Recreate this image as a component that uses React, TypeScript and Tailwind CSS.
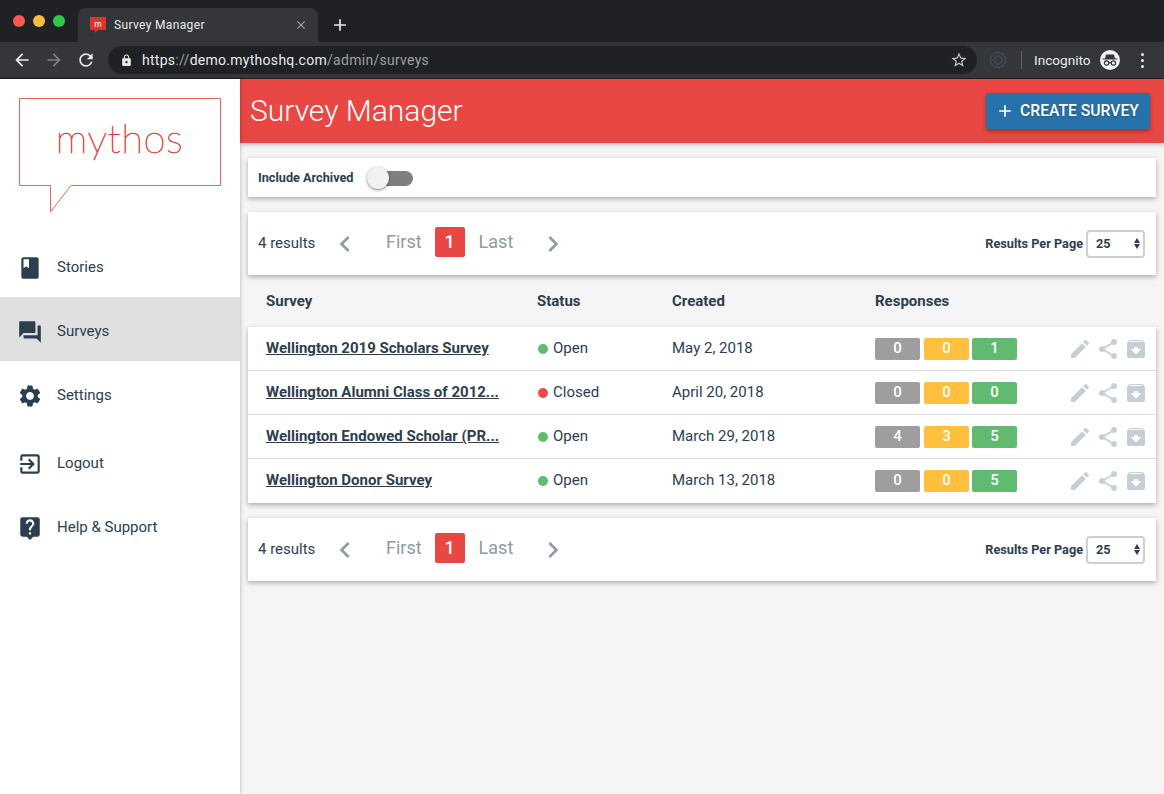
import { MdBook, MdQuestionAnswer, MdSettings, MdExitToApp, MdLiveHelp, MdEdit, MdShare, MdArchive, MdChevronLeft, MdChevronRight, MdArrowBack, MdArrowForward, MdRefresh, MdLock, MdStarBorder, MdClose, MdAdd } from 'react-icons/md';

const navItems = [
  { label: 'Stories', icon: MdBook, row: 'h-[64px] pt-[5px]' },
  { label: 'Surveys', icon: MdQuestionAnswer, row: 'h-[64px] pt-[5px]', active: true },
  { label: 'Settings', icon: MdSettings, row: 'h-[68px] pt-[1px]' },
  { label: 'Logout', icon: MdExitToApp, row: 'h-[68px] pt-[1px]' },
  { label: 'Help & Support', icon: MdLiveHelp, row: 'h-[60px] pt-[1px]' },
];

const surveys = [
  { name: 'Wellington 2019 Scholars Survey', status: 'Open', created: 'May 2, 2018', counts: [0, 0, 1] },
  { name: 'Wellington Alumni Class of 2012...', status: 'Closed', created: 'April 20, 2018', counts: [0, 0, 0] },
  { name: 'Wellington Endowed Scholar (PR...', status: 'Open', created: 'March 29, 2018', counts: [4, 3, 5] },
  { name: 'Wellington Donor Survey', status: 'Open', created: 'March 13, 2018', counts: [0, 0, 5] },
];

function BrowserChrome() {
  return (
    <div className="font-['Roboto',sans-serif]">
      {/* Tab strip */}
      <div className="flex h-[42px] items-end bg-[#202124]">
        <div className="flex h-[42px] w-[78px] items-center gap-[8px] pl-[13px]">
          <span className="h-[12px] w-[12px] rounded-full bg-[#fc5753]" />
          <span className="h-[12px] w-[12px] rounded-full bg-[#fdbc40]" />
          <span className="h-[12px] w-[12px] rounded-full bg-[#33c748]" />
        </div>
        <div className="flex h-[34px] w-[240px] items-center rounded-t-[8px] bg-[#35363a] pl-[12px] pr-[10px]">
          <svg width="16" height="17" viewBox="0 0 16 17" className="mt-[1px]">
            <path d="M0 0h16v13H8l-3 3v-3H0z" fill="#e0322e" />
            <text x="8" y="9.5" fontSize="9" fill="#fff" textAnchor="middle" fontFamily="Lato, sans-serif">m</text>
          </svg>
          <span className="ml-[8px] flex-1 text-[12px] tracking-[0.35px] text-[#e8eaed]">Survey Manager</span>
          <MdClose className="text-[14px] text-[#9aa0a6]" />
        </div>
        <MdAdd className="mb-[7px] ml-[12px] text-[20px] text-[#e8eaed]" />
      </div>
      {/* Toolbar */}
      <div className="flex h-[37px] items-center border-b border-[#1d1e20] bg-[#35363a]">
        <div className="flex w-[108px] items-center gap-[12px] pl-[12px] text-[20px]">
          <MdArrowBack className="text-[#e8eaed]" />
          <MdArrowForward className="text-[#7d7f82]" />
          <MdRefresh className="text-[#e8eaed]" />
        </div>
        <div className="flex h-[28px] w-[869px] items-center rounded-full bg-[#202124] pl-[12px] pr-[9px]">
          <MdLock className="text-[13px] text-[#e8eaed]" />
          <span className="ml-[9px] flex-1 text-[14px] tracking-[0.28px] text-[#9aa0a6]">
            <span className="text-[#e8eaed]">https</span>://<span className="text-[#e8eaed]">demo.mythoshq.com</span>/admin/surveys
          </span>
          <MdStarBorder className="text-[18px] text-[#c4c7ca]" />
        </div>
        <svg width="20" height="20" viewBox="0 0 20 20" className="ml-[11px]" fill="none" stroke="#414c57" strokeWidth="1.5">
          <circle cx="10" cy="10" r="7.5" />
          <rect x="6.5" y="6.5" width="7" height="7" rx="1.5" transform="rotate(45 10 10)" />
        </svg>
        <span className="ml-[13px] h-[18px] w-px bg-[#5f6368]" />
        <span className="ml-[12px] text-[13.6px] text-[#e8eaed]">Incognito</span>
        <svg width="20" height="20" viewBox="0 0 20 20" className="ml-[9px]">
          <circle cx="10" cy="10" r="10" fill="#f1f3f4" />
          <path d="M6 4.5h8l1 4h2.5v1h-15v-1H5z" fill="#35363a" />
          <circle cx="6.6" cy="13" r="2.2" fill="none" stroke="#35363a" strokeWidth="1.2" />
          <circle cx="13.4" cy="13" r="2.2" fill="none" stroke="#35363a" strokeWidth="1.2" />
          <path d="M8.8 12.8h2.4" stroke="#35363a" strokeWidth="1.2" />
        </svg>
        <div className="ml-[21px] flex flex-col gap-[3px]">
          <span className="h-[3px] w-[3px] rounded-full bg-[#e8eaed]" />
          <span className="h-[3px] w-[3px] rounded-full bg-[#e8eaed]" />
          <span className="h-[3px] w-[3px] rounded-full bg-[#e8eaed]" />
        </div>
      </div>
    </div>
  );
}

function Sidebar() {
  return (
    <aside className="relative z-10 w-[240px] shrink-0 bg-white shadow-[0_0_4px_rgba(0,0,0,0.3)]">
      <div className="h-[154px] pl-[19px] pt-[19px]">
        <svg width="202" height="116" viewBox="0 0 202 116" fill="none">
          <path d="M0.5 0.5H201.5V87.5H52L31.5 114V87.5H0.5Z" stroke="#ec6461" strokeWidth="1" />
          <text x="100.5" y="55" fontSize="40" fill="#e23a36" stroke="#e23a36" strokeWidth="0.6" textAnchor="middle" fontFamily="Lato, sans-serif" fontWeight="200" letterSpacing="0.5">mythos</text>
        </svg>
      </div>
      <nav>
        {navItems.map(({ label, icon: Icon, row, active }) => (
          <div key={label} className={`flex items-center pl-[17px] ${row} ${active ? 'bg-[#e0e0e0]' : ''}`}>
            <Icon className="text-[26px] text-[#2c3e50]" />
            <span className="ml-[14px] text-[15px] text-[#2c3e50]">{label}</span>
          </div>
        ))}
      </nav>
    </aside>
  );
}

function Pagination() {
  return (
    <div className="flex h-[63px] items-center bg-white pl-[10px] pr-[11px] text-[#2c3e50] shadow-[0_2px_5px_rgba(0,0,0,0.3)]">
      <span className="w-[71px] text-[15px]">4 results</span>
      <MdChevronLeft className="text-[32px] text-[#8e9aa6]" />
      <span className="mb-[4px] ml-[25px] text-[18px] text-[#8e9aa6]">First</span>
      <span className="mb-[4px] ml-[13px] flex h-[30px] w-[30px] items-center justify-center rounded-[2px] bg-[#e84743] text-[18px] font-medium text-white">1</span>
      <span className="mb-[4px] ml-[14px] text-[18px] text-[#8e9aa6]">Last</span>
      <MdChevronRight className="ml-[24px] text-[32px] text-[#8e9aa6]" />
      <span className="ml-auto text-[12.7px] font-bold">Results Per Page</span>
      <div className="ml-[3px] flex h-[28px] w-[59px] items-center justify-between rounded-[4px] border-2 border-[#cfcfcf] pl-[8px] pr-[3px] text-[12.7px] font-bold">
        25
        <span className="flex flex-col gap-[1px]">
          <span className="h-0 w-0 border-x-[3px] border-b-[5px] border-x-transparent border-b-[#2c3e50]" />
          <span className="h-0 w-0 border-x-[3px] border-t-[5px] border-x-transparent border-t-[#2c3e50]" />
        </span>
      </div>
    </div>
  );
}

function SurveyRow({ name, status, created, counts }: (typeof surveys)[number]) {
  const colors = ['bg-[#9e9e9e]', 'bg-[#ffc03d]', 'bg-[#60bb71] -ml-[1px]'];
  return (
    <div className="grid h-[44px] grid-cols-[271px_135px_203px_193px_1fr] items-center border-b border-[#dcdcdc] pl-[18px] text-[15px] text-[#2c3e50] last:border-b-0 last:pb-[1px]">
      <a className="font-bold underline">{name}</a>
      <div className="flex items-center gap-[5px] pl-[1px]">
        <span className={`h-[10px] w-[10px] rounded-full ${status === 'Open' ? 'bg-[#60bb71]' : 'bg-[#f04848]'}`} />
        {status}
      </div>
      <span>{created}</span>
      <div className="flex gap-[4px]">
        {counts.map((count, i) => (
          <span key={i} className={`flex h-[22px] w-[45px] items-center justify-center rounded-[2px] text-[15px] font-medium text-white ${colors[i]}`}>{count}</span>
        ))}
      </div>
      <div className="flex items-center gap-[4px] text-[24px] text-[#c5ced4]">
        <MdEdit />
        <MdShare />
        <MdArchive />
      </div>
    </div>
  );
}

export default function App() {
  return (
    <div className="flex h-[794px] w-[1164px] flex-col overflow-hidden font-['Roboto',sans-serif]">
      <BrowserChrome />
      <div className="flex min-h-0 flex-1">
        <Sidebar />
        <main className="flex-1 bg-[#f5f5f5]">
          <header className="flex h-[64px] items-center justify-between bg-[#e84743] pl-[10px] pr-[14px] shadow-[0_2px_4px_rgba(0,0,0,0.2)]">
            <h1 className="mb-[2px] text-[30px] font-light text-white">Survey Manager</h1>
            <button className="flex h-[36px] w-[164px] items-center justify-center gap-[5px] rounded-[2px] bg-[#2872ab] pr-[2px] text-[15.7px] font-medium text-white shadow-[0_2px_4px_rgba(0,0,0,0.35)] [text-shadow:0_1px_2px_rgba(0,0,0,0.3)]">
              <MdAdd className="text-[20px]" />
              CREATE SURVEY
            </button>
          </header>
          <div className="px-[8px] pt-[15px]">
            <div className="flex h-[39px] items-center bg-white pl-[10px] shadow-[0_2px_5px_rgba(0,0,0,0.3)]">
              <span className="mt-[1px] text-[12.7px] font-bold text-[#2c3e50]">Include Archived</span>
              <div className="relative ml-[17px] mt-[1px] h-[15px] w-[42px] rounded-full bg-[#7f7f7f]">
                <span className="absolute left-[-4px] top-[-4px] h-[22px] w-[22px] rounded-full bg-[#f1f1f1] shadow-[0_1px_3px_rgba(0,0,0,0.5)]" />
              </div>
            </div>
            <div className="mt-[15px]">
              <Pagination />
            </div>
            <div className="grid h-[52px] grid-cols-[271px_135px_203px_1fr] items-center pl-[18px] pt-[1px] text-[15px] font-bold text-[#2c3e50]">
              <span>Survey</span>
              <span>Status</span>
              <span>Created</span>
              <span>Responses</span>
            </div>
            <div className="bg-white shadow-[0_2px_5px_rgba(0,0,0,0.3)]">
              {surveys.map((survey) => (
                <SurveyRow key={survey.name} {...survey} />
              ))}
            </div>
            <div className="mt-[15px]">
              <Pagination />
            </div>
          </div>
        </main>
      </div>
    </div>
  );
}
